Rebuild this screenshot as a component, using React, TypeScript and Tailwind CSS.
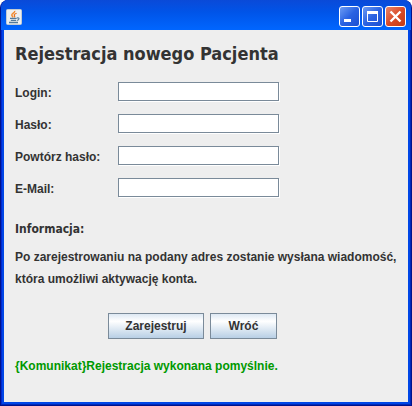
import type { ReactNode } from "react";

const fields = [
  { id: "login", label: "Login:", type: "text" },
  { id: "password", label: "Hasło:", type: "password" },
  { id: "repeat", label: "Powtórz hasło:", type: "password" },
  { id: "email", label: "E-Mail:", type: "email" },
];

function JavaIcon() {
  return (
    <svg width="16" height="16" viewBox="0 0 16 16" fill="none" aria-hidden="true">
      <rect x="0.5" y="0.5" width="15" height="15" rx="1" fill="#eef0f0" stroke="#c3cbd2" />
      <path d="M8.8 1.8C9.2 3.8 5.2 4.4 5.8 6.3C6 7 6.7 7.5 7.2 8.3" stroke="#f28a2e" strokeWidth="1.4" />
      <path d="M10.6 4.2C8.2 5 7.8 5.8 8.5 6.7C8.9 7.3 8.7 7.9 8.3 8.3" stroke="#e9731c" strokeWidth="1.2" />
      <path d="M4 9.4H10.7M4.8 11.4H10M3 13.5H12" stroke="#527a9b" strokeWidth="1.3" />
      <path d="M11 9C13.8 8.2 13.6 10.9 10.8 11.5" stroke="#527a9b" strokeWidth="1.1" />
    </svg>
  );
}

function CaptionButton({ label, danger, children }: { label: string; danger?: boolean; children: ReactNode }) {
  return (
    <button
      type="button"
      aria-label={label}
      className={
        "h-[21px] w-[21px] rounded-[3px] border border-white " +
        (danger
          ? "bg-linear-to-br from-[#e98468] via-[#da4b28] to-[#c13c14]"
          : "bg-linear-to-br from-[#6d9bf3] via-[#2a62e2] to-[#1b4fd2]")
      }
    >
      <svg width="19" height="19" viewBox="0 0 19 19" fill="none" aria-hidden="true">
        {children}
      </svg>
    </button>
  );
}

function FormButton({ width, children }: { width: string; children: ReactNode }) {
  return (
    <button
      type="button"
      className={
        "h-[26px] border border-[#7a8a99] bg-linear-to-b from-[#dde8f3] via-white via-30% to-[#b8cfe5] leading-6 " + width
      }
    >
      {children}
    </button>
  );
}

export default function App() {
  return (
    <div className="bg-white">
      <div className="flex min-h-screen flex-col overflow-hidden rounded-t-lg border-x border-b border-[#00138c] bg-[#0046e6] px-[3px] pb-[3px] font-['Liberation_Sans',Arial,sans-serif] text-[12px] font-bold text-[#333333] shadow-[inset_-1px_-1px_0_#0028b8,inset_1px_0_0_#0028d0]">
        <header className="-mx-[3px] flex h-[30px] items-center justify-between bg-linear-to-b from-[#0a4ad8] from-0% via-[#0054e8] via-40% to-[#0066ff] pt-[3px] pr-[5px] pl-[5px]">
          <JavaIcon />
          <div className="flex gap-[2px]">
            <CaptionButton label="Minimalizuj">
              <rect x="4" y="12" width="7" height="3" fill="white" />
            </CaptionButton>
            <CaptionButton label="Maksymalizuj">
              <path d="M4.5 4V14.5H14.5V4" stroke="white" />
              <rect x="4" y="4" width="11" height="3" fill="white" />
            </CaptionButton>
            <CaptionButton label="Zamknij" danger>
              <path d="M4.5 4.5L14.5 14.5M14.5 4.5L4.5 14.5" stroke="white" strokeWidth="2.4" />
            </CaptionButton>
          </div>
        </header>
        <main className="grow bg-[#eeeeee] px-[11px] pt-3">
          <h1 className="font-['DejaVu_Sans_Condensed','DejaVu_Sans',sans-serif] text-[18px] leading-6">
            Rejestracja nowego Pacjenta
          </h1>
          <form>
            <div className="mt-4 flex flex-col gap-3">
              {fields.map((f) => (
                <div key={f.id} className="flex h-5 items-start">
                  <label htmlFor={f.id} className="w-[103px] leading-[22px]">
                    {f.label}
                  </label>
                  <input
                    id={f.id}
                    type={f.type}
                    className="h-[19px] w-[161px] border border-[#7a8a99] bg-white px-1 shadow-[1px_1px_0_#ffffff] outline-none"
                  />
                </div>
              ))}
            </div>
            <h2 className="mt-5 font-['DejaVu_Sans_Condensed','DejaVu_Sans',sans-serif] text-[12px] leading-[22px]">
              Informacja:
            </h2>
            <p className="mt-[6px] leading-[22px] whitespace-nowrap">
              Po zarejestrowaniu na podany adres zostanie wysłana wiadomość,
              <br />
              która umożliwi aktywację konta.
            </p>
            <div className="mt-[23px] ml-[93px] flex gap-[6px]">
              <FormButton width="w-24">Zarejestruj</FormButton>
              <FormButton width="w-[67px]">Wróć</FormButton>
            </div>
          </form>
          <p role="status" className="mt-4 leading-[22px] text-[#009900]">
            {"{Komunikat}Rejestracja wykonana pomyślnie."}
          </p>
        </main>
      </div>
    </div>
  );
}
